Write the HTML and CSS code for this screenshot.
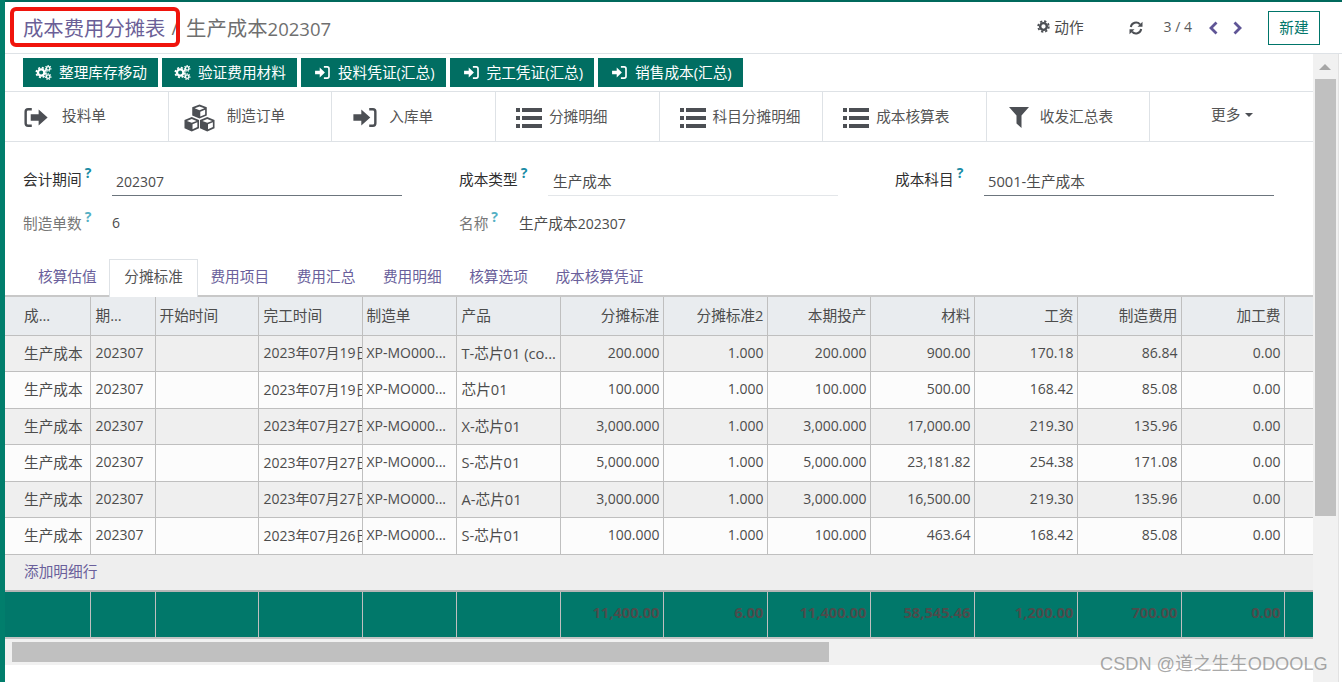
FILE: index.html
```html
<!DOCTYPE html>
<html lang="zh-CN">
<head>
<meta charset="utf-8">
<title>成本费用分摊表</title>
<link rel="stylesheet" href="styles.css">
</head>
<body>
<svg class="defs" width="0" height="0" aria-hidden="true">
  <symbol id="i-cogs" viewBox="0 0 18 16">
    <circle cx="6.5" cy="8" r="3.4" fill="none" stroke="currentColor" stroke-width="2.4"/>
    <circle cx="6.5" cy="8" r="5.2" fill="none" stroke="currentColor" stroke-width="1.8" stroke-dasharray="2.2 1.9"/>
    <circle cx="14" cy="3.6" r="1.9" fill="none" stroke="currentColor" stroke-width="1.5"/>
    <circle cx="14" cy="3.6" r="3" fill="none" stroke="currentColor" stroke-width="1.1" stroke-dasharray="1.4 1.2"/>
    <circle cx="14" cy="12.4" r="1.9" fill="none" stroke="currentColor" stroke-width="1.5"/>
    <circle cx="14" cy="12.4" r="3" fill="none" stroke="currentColor" stroke-width="1.1" stroke-dasharray="1.4 1.2"/>
  </symbol>
  <symbol id="i-in" viewBox="0 0 16 14">
    <path fill="currentColor" d="M0 5h5V1.6L10.6 7 5 12.4V9H0z"/>
    <path fill="none" stroke="currentColor" stroke-width="1.8" d="M9.5 1H13a2 2 0 0 1 2 2v8a2 2 0 0 1-2 2H9.500"/>
  </symbol>
  <symbol id="i-out" viewBox="0 0 22 18">
    <path fill="none" stroke="currentColor" stroke-width="2.3" d="M7 1.200H3.500A2.300 2.300 0 0 0 1.200 3.500v11a2.300 2.300 0 0 0 2.300 2.300H7"/>
    <path fill="currentColor" d="M6 6h7.500V1.500L22 9l-8.500 7.500V12H6z"/>
  </symbol>
  <symbol id="i-sign" viewBox="0 0 22 18">
    <path fill="currentColor" d="M0 6h7.500V1.500L16 9l-8.500 7.500V12H0z"/>
    <path fill="none" stroke="currentColor" stroke-width="2.300" d="M15 1.200h3.500a2.300 2.300 0 0 1 2.300 2.300v11a2.300 2.300 0 0 1-2.300 2.300H15"/>
  </symbol>
  <symbol id="i-cubes" viewBox="0 0 32 28">
    <path fill="currentColor" d="M16 0l7.500 3v8.500L16 14.500l-7.500-3V3zM16 2L11 4l5 2 5-2zM16.800 7.500v5l5-2V5.500z"/>
    <path fill="currentColor" d="M8 13l7.500 3v8.500L8 28 .5 24.500V16zM8 15l-5 2 5 2 5-2zM8.800 20.500v5l5-2.200v-4.800z"/>
    <path fill="currentColor" d="M24 13l7.500 3v8.500L24 28l-7.500-3.500V16zM24 15l-5 2 5 2 5-2zM24.800 20.500v5l5-2.200v-4.800z"/>
  </symbol>
  <symbol id="i-list" viewBox="0 0 26 20">
    <path fill="currentColor" d="M0 0h4v4H0zM6 0h20v4H6zM0 8h4v4H0zM6 8h20v4H6zM0 16h4v4H0zM6 16h20v4H6z"/>
  </symbol>
  <symbol id="i-filter" viewBox="0 0 20 21">
    <path fill="currentColor" d="M0 0h20L12.500 8.500V21L7.500 16.500v-8z"/>
  </symbol>
  <symbol id="i-gear" viewBox="0 0 14 14">
    <circle cx="7" cy="7" r="3.600" fill="none" stroke="currentColor" stroke-width="2.600"/>
    <circle cx="7" cy="7" r="5.700" fill="none" stroke="currentColor" stroke-width="2" stroke-dasharray="2.400 2.080"/>
  </symbol>
  <symbol id="i-refresh" viewBox="0 0 14 14">
    <path fill="none" stroke="currentColor" stroke-width="2" d="M1.800 6A5.300 5.300 0 0 1 11 3.400"/>
    <path fill="currentColor" d="M13.500 .8v5h-5z"/>
    <path fill="none" stroke="currentColor" stroke-width="2" d="M12.200 8A5.300 5.300 0 0 1 3 10.600"/>
    <path fill="currentColor" d="M.5 13.200v-5h5z"/>
  </symbol>
  <symbol id="i-prev" viewBox="0 0 10 14">
    <path fill="none" stroke="currentColor" stroke-width="2.800" d="M8 1.500L2.500 7 8 12.500"/>
  </symbol>
  <symbol id="i-next" viewBox="0 0 10 14">
    <path fill="none" stroke="currentColor" stroke-width="2.800" d="M2 1.500L7.500 7 2 12.500"/>
  </symbol>
</svg>

<div class="app">
  <div class="rail"></div>
  <div class="page">
    <header class="head">
      <div class="crumbs"><span class="crumb-link">成本费用分摊表</span><span class="crumb-sep">/</span><span class="crumb-cur"><span class="crumb-zh">生产成本</span>202307</span></div>
      <div class="head-actions">
        <span class="action"><svg class="ic-gear"><use href="#i-gear"/></svg>动作</span>
        <svg class="ic-refresh"><use href="#i-refresh"/></svg>
        <span class="pager">3 / 4</span>
        <svg class="ic-chev"><use href="#i-prev"/></svg>
        <svg class="ic-chev ic-next"><use href="#i-next"/></svg>
        <span class="btn-new">新建</span>
      </div>
    </header>
    <div class="below">
      <main class="content">
        <div class="toolbar">
          <span class="tbtn"><svg class="ic-cogs"><use href="#i-cogs"/></svg>整理库存移动</span>
          <span class="tbtn"><svg class="ic-cogs"><use href="#i-cogs"/></svg>验证费用材料</span>
          <span class="tbtn"><svg class="ic-in"><use href="#i-in"/></svg>投料凭证(汇总)</span>
          <span class="tbtn"><svg class="ic-in"><use href="#i-in"/></svg>完工凭证(汇总)</span>
          <span class="tbtn"><svg class="ic-in"><use href="#i-in"/></svg>销售成本(汇总)</span>
        </div>
        <div class="stats">
          <div class="stat up"><svg class="ic-out"><use href="#i-out"/></svg><span class="g38">投料单</span></div>
          <div class="stat up"><svg class="ic-cubes"><use href="#i-cubes"/></svg><span class="g12">制造订单</span></div>
          <div class="stat"><svg class="ic-out ic-sign"><use href="#i-sign"/></svg><span class="g14">入库单</span></div>
          <div class="stat"><svg class="ic-list"><use href="#i-list"/></svg><span>分摊明细</span></div>
          <div class="stat"><svg class="ic-list"><use href="#i-list"/></svg><span>科目分摊明细</span></div>
          <div class="stat"><svg class="ic-list"><use href="#i-list"/></svg><span>成本核算表</span></div>
          <div class="stat"><svg class="ic-filter"><use href="#i-filter"/></svg><span>收发汇总表</span></div>
          <div class="stat more up">更多<i class="caret"></i></div>
        </div>
        <section class="form">
          <div class="field"><label class="lbl">会计期间<sup>?</sup></label><span class="val line-dark num">202307</span></div>
          <div class="field"><label class="lbl">成本类型<sup>?</sup></label><span class="val line-light">生产成本</span></div>
          <div class="field"><label class="lbl">成本科目<sup>?</sup></label><span class="val line-dark">5001-生产成本</span></div>
          <div class="field ro"><label class="lbl muted">制造单数<sup>?</sup></label><span class="plain num">6</span></div>
          <div class="field ro"><label class="lbl muted short">名称<sup>?</sup></label><span class="plain">生产成本<span class="num">202307</span></span></div>
        </section>
        <nav class="tabs">
          <span class="tab">核算估值</span>
          <span class="tab on">分摊标准</span>
          <span class="tab">费用项目</span>
          <span class="tab">费用汇总</span>
          <span class="tab">费用明细</span>
          <span class="tab">核算选项</span>
          <span class="tab">成本核算凭证</span>
        </nav>
        <div class="grid-wrap">
          <table class="grid">
            <colgroup>
              <col class="c0"><col class="c1"><col class="c2"><col class="c3"><col class="c4"><col class="c5">
              <col class="c6"><col class="c7"><col class="c8"><col class="c9"><col class="c10"><col class="c11"><col class="c12"><col class="c13">
            </colgroup>
            <thead>
              <tr><th class="first">成...</th><th class="p5">期...</th><th>开始时间</th><th class="p5">完工时间</th><th>制造单</th><th class="p5">产品</th><th class="h">分摊标准</th><th class="h">分摊标准2</th><th class="h">本期投产</th><th class="h">材料</th><th class="h">工资</th><th class="h">制造费用</th><th class="h">加工费</th><th></th></tr>
            </thead>
            <tbody>
              <tr><td class="first">生产成本</td><td class="d p5">202307</td><td></td><td class="d p5">2023年07月19日</td><td class="d">XP-MO000...</td><td class="p5">T-芯片01 (co...</td><td class="n">200.000</td><td class="n">1.000</td><td class="n">200.000</td><td class="n">900.00</td><td class="n">170.18</td><td class="n">86.84</td><td class="n">0.00</td><td></td></tr>
              <tr><td class="first">生产成本</td><td class="d p5">202307</td><td></td><td class="d p5">2023年07月19日</td><td class="d">XP-MO000...</td><td class="p5">芯片01</td><td class="n">100.000</td><td class="n">1.000</td><td class="n">100.000</td><td class="n">500.00</td><td class="n">168.42</td><td class="n">85.08</td><td class="n">0.00</td><td></td></tr>
              <tr><td class="first">生产成本</td><td class="d p5">202307</td><td></td><td class="d p5">2023年07月27日</td><td class="d">XP-MO000...</td><td class="p5">X-芯片01</td><td class="n">3,000.000</td><td class="n">1.000</td><td class="n">3,000.000</td><td class="n">17,000.00</td><td class="n">219.30</td><td class="n">135.96</td><td class="n">0.00</td><td></td></tr>
              <tr><td class="first">生产成本</td><td class="d p5">202307</td><td></td><td class="d p5">2023年07月27日</td><td class="d">XP-MO000...</td><td class="p5">S-芯片01</td><td class="n">5,000.000</td><td class="n">1.000</td><td class="n">5,000.000</td><td class="n">23,181.82</td><td class="n">254.38</td><td class="n">171.08</td><td class="n">0.00</td><td></td></tr>
              <tr><td class="first">生产成本</td><td class="d p5">202307</td><td></td><td class="d p5">2023年07月27日</td><td class="d">XP-MO000...</td><td class="p5">A-芯片01</td><td class="n">3,000.000</td><td class="n">1.000</td><td class="n">3,000.000</td><td class="n">16,500.00</td><td class="n">219.30</td><td class="n">135.96</td><td class="n">0.00</td><td></td></tr>
              <tr><td class="first">生产成本</td><td class="d p5">202307</td><td></td><td class="d p5">2023年07月26日</td><td class="d">XP-MO000...</td><td class="p5">S-芯片01</td><td class="n">100.000</td><td class="n">1.000</td><td class="n">100.000</td><td class="n">463.64</td><td class="n">168.42</td><td class="n">85.08</td><td class="n">0.00</td><td></td></tr>
              <tr class="add"><td colspan="14">添加明细行</td></tr>
            </tbody>
            <tfoot>
              <tr><td></td><td></td><td></td><td></td><td></td><td></td><td class="n">11,400.00</td><td class="n">6.00</td><td class="n">11,400.00</td><td class="n">58,545.46</td><td class="n">1,200.00</td><td class="n">700.00</td><td class="n">0.00</td><td></td></tr>
            </tfoot>
          </table>
          <div class="hscroll"><div class="hthumb"></div></div>
        </div>
      </main>
      <aside class="vscroll"><div class="vbtn"><i class="vup"></i></div><div class="vthumb"></div></aside>
    </div>
  </div>
</div>
<div class="redbox"></div>
<div class="mark">CSDN @道之生生ODOOLG</div>
</body>
</html>
```
FILE: styles.css
```css
* { box-sizing: border-box; }
html, body { margin: 0; height: 100%; overflow: hidden; background: #fff; }
body { font-family: "Open Sans", "Noto Sans CJK SC", sans-serif; font-size: 14.67px; color: #4c4c4c; }
.defs { position: absolute; }
svg { display: block; flex: none; }
.num { font-size: 14px; }

.app { display: flex; height: 682px; }
.rail { width: 5px; background: #017e6c; flex: none; }
.page { flex: 1; min-width: 0; display: flex; flex-direction: column; border-top: 2px solid #00695c; }

.head { height: 52px; flex: none; display: flex; align-items: center; justify-content: space-between; padding: 0 22px 0 18px; border-bottom: 1px solid #dee2e6; }
.crumbs { display: flex; align-items: center; font-size: 18.5px; line-height: 28px; margin-top: 1px; }
.crumb-link { color: #6b5f97; font-size: 20.35px; }
.crumb-sep { color: #6b6b6b; margin: 0 8px 0 6px; font-size: 18px; }
.crumb-cur { color: #6f6f6f; }
.crumb-zh { font-size: 20.4px; }
.head-actions { display: flex; align-items: center; }
.action { display: flex; align-items: center; color: #4c4c4c; gap: 4px; padding-bottom: 3px; }
.ic-gear { width: 13px; height: 13px; color: #4c4f54; }
.ic-refresh { width: 14px; height: 14px; color: #4c4f54; margin-left: 45px; }
.pager { margin: 0 2px 0 21px; color: #5a5a5a; font-size: 14px; padding-bottom: 2px; }
.ic-chev { width: 11px; height: 14px; color: #5f5596; margin-left: 14px; }
.ic-next { margin-left: 13px; }
.btn-new { margin-left: 25px; width: 52px; height: 34px; border: 1px solid #00756a; color: #00756a; display: flex; align-items: center; justify-content: center; padding-bottom: 3px; }

.below { flex: 1; display: flex; min-height: 0; }
.content { width: 1308px; flex: none; display: flex; flex-direction: column; }

.toolbar { height: 38px; flex: none; display: flex; gap: 4px; padding: 4px 0 0 18px; border-bottom: 1px solid #dee2e6; }
.tbtn { height: 29px; padding: 0 11px 3px 12px; background: #016e62; color: #fff; display: flex; align-items: center; white-space: nowrap; }
.tbtn .ic-in { margin-left: 2px; }
.ic-cogs { width: 17px; height: 15px; margin-right: 7px; margin-top: 3px; }
.ic-in { width: 15px; height: 13px; margin-right: 8px; margin-top: 3px; }

.stats { height: 50px; flex: none; display: grid; grid-template-columns: repeat(8, 1fr); border-bottom: 1px solid #dee2e6; margin-right: -1px; }
.stat { display: flex; align-items: center; padding-left: 19px; gap: 12px; border-right: 1px solid #dee2e6; color: #555; white-space: nowrap; }
.stat span { margin-top: -2px; }
.stat svg { margin-top: 2px; }
.stat:last-child { border-right: 0; }
.stat.up span { margin-top: -5px; }
.g38 { margin-left: 2px; }
.g14 { margin-left: 2px; }
.ic-out { width: 24px; height: 19px; color: #4c4f54; }
.ic-sign { margin-left: 2px; margin-right: -2px; }
.ic-cubes { width: 31px; height: 28px; color: #4c4f54; margin-left: -4px; }
.ic-list { width: 26px; height: 20px; color: #4c4f54; margin-left: 1px; margin-right: -5px; }
.ic-filter { width: 20px; height: 21px; color: #4c4f54; margin: 0 -1px 0 3px; }
.more { justify-content: center; padding: 0 0 6px; gap: 5px; }
.more .caret { margin-top: 3px; }
.caret { width: 0; height: 0; border: 4px solid transparent; border-top-color: #4c4f54; border-bottom: 0; }

.form { height: 117px; flex: none; display: grid; grid-template-columns: repeat(3, 436px); grid-template-rows: 44px 34px; padding: 22px 0 0 18px; align-content: start; }
.field { display: flex; align-items: flex-start; }
.lbl { width: 89px; flex: none; color: #2f2f2f; line-height: 20px; padding-top: 5px; }
.lbl sup { color: #1b8ca5; font-size: 14px; font-weight: 700; line-height: 0; margin-left: 3px; vertical-align: 7px; }
.muted { color: #777; }
.muted sup { color: #55b0c4; }
.short { width: 60px; }
.val { width: 290px; height: 32px; padding: 7px 0 0 4px; line-height: 20px; color: #4c4c4c; }
.val.num { padding-top: 8px; }
.line-dark { border-bottom: 1px solid #6c757d; }
.line-light { border-bottom: 1px solid #e3e6e9; padding-left: 5px; }
.ro .lbl, .plain { padding-top: 5px; line-height: 20px; }
.plain { color: #4c4c4c; }

.tabs { height: 36px; flex: none; display: flex; padding-left: 19.2px; }
.tab { height: 36px; padding: 7px 13.8px 0; color: #6a5f9b; line-height: 20px; white-space: nowrap; }
.tab.on { background: #fff; color: #555; border: 1px solid #dee2e6; border-bottom: 0; margin: 0 -1px -2px; padding-top: 6px; height: 38px; position: relative; z-index: 1; }

.grid-wrap { flex: none; width: 1308px; overflow: hidden; }
.grid { border-collapse: collapse; table-layout: fixed; width: 1308px; border-top: 2px solid #c8c8c8; }
.c0 { width: 85px; } .c1 { width: 65px; } .c2 { width: 103px; } .c3 { width: 104px; } .c4 { width: 94px; } .c5 { width: 104px; }
.c6 { width: 103px; } .c7 { width: 104px; } .c8 { width: 103px; } .c9 { width: 104px; } .c10 { width: 103px; } .c11 { width: 104px; } .c12 { width: 103px; } .c13 { width: 29px; }
.grid th, .grid td { border: 1px solid #bfbfbf; border-top: 0; padding: 0 4px 2px; font-weight: 400; text-align: left; white-space: nowrap; overflow: hidden; height: 36.500px; color: #4c4c4c; }
.grid tr > :first-child { border-left: 0; }
.grid tr > :last-child { border-right: 0; }
.grid th { background: #e9ecef; height: 39px; padding-bottom: 3px; }
.grid .first { padding-left: 19px; }
.grid .p5 { padding-left: 5px; }
.grid .d { font-size: 14px; }
.grid .n { text-align: right; padding-right: 3px; font-size: 14px; }
.grid .h { text-align: right; padding-right: 3px; }
.grid tbody tr:nth-child(odd) td { background: #efefef; }
.grid tbody tr:nth-child(even) td { background: #fcfcfc; }
.grid tbody tr.add td { background: #eee; color: #6a5f9b; padding-left: 19px; padding-bottom: 3px; border-bottom: 2px solid #b5b5b5; height: 36.500px; border-right: 0; }
.grid tfoot td { background: #01786a; height: 47px; font-weight: 700; color: #4c4c4c; border-bottom: 2px solid #c4c4c4; padding-top: 0; padding-bottom: 4px; }
.grid tfoot .n { font-size: 14.67px; }

.hscroll { height: 26px; background: #f1f1f1; padding: 3px 0 0 7px; }
.hthumb { width: 817px; height: 20px; background: #c0c0c0; }

.vscroll { width: 26px; flex: none; background: #f1f1f1; border-right: 1px solid #e2e2e2; padding-left: 2px; }
.vbtn { height: 25px; display: flex; justify-content: center; padding: 10px 3px 0 0; }
.vup { width: 0; height: 0; border: 6px solid transparent; border-bottom-color: #a6a6a6; border-top: 0; }
.vthumb { width: 21px; height: 437px; background: #c0c0c0; }

.redbox { position: absolute; left: 10px; top: 7px; width: 170px; height: 40px; border: 4px solid #f0140c; border-radius: 6px; }
.mark { position: absolute; left: 1100px; top: 652px; font-family: "Liberation Sans", "Noto Sans CJK SC", sans-serif; font-size: 18.2px; line-height: 24px; color: rgba(130, 130, 130, .7); white-space: nowrap; }
```
